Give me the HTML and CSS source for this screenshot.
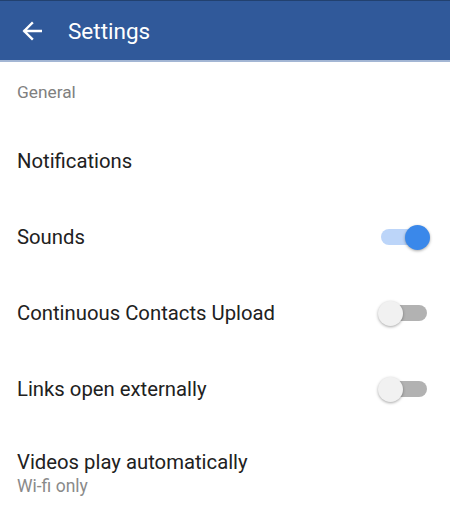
FILE: index.html
```html
<!DOCTYPE html>
<html lang="en">
<head>
    <meta charset="UTF-8">
    <meta name="viewport" content="width=device-width, initial-scale=1.0">
    <title>Settings</title>
    <link rel="stylesheet" href="styles.css">
</head>
<body>
    <div class="toolbar">
        <button class="back" aria-label="Back">
            <svg width="20" height="20" viewBox="0 0 20 20">
                <path d="M19 10H2.5M10 2.2L2.2 10L10 17.8" fill="none" stroke="#fff" stroke-width="2.4" stroke-linecap="square"/>
            </svg>
        </button>
        <h1>Settings</h1>
    </div>
    <div class="section">General</div>
    <ul class="list">
        <li class="row">
            <span class="label">Notifications</span>
        </li>
        <li class="row">
            <span class="label">Sounds</span>
            <span class="switch on"><span class="knob"></span></span>
        </li>
        <li class="row">
            <span class="label">Continuous Contacts Upload</span>
            <span class="switch"><span class="knob"></span></span>
        </li>
        <li class="row">
            <span class="label">Links open externally</span>
            <span class="switch"><span class="knob"></span></span>
        </li>
        <li class="row double">
            <div>
                <div class="label">Videos play automatically</div>
                <div class="sub">Wi-fi only</div>
            </div>
        </li>
    </ul>
</body>
</html>
```

FILE: styles.css
```css
body {
    margin: 0;
    font-family: Roboto, "Noto Sans", sans-serif;
    background: #fff;
    color: #212121;
}
.toolbar {
    height: 59px;
    background: #30599a;
    border-top: 1px solid #22416f;
    border-bottom: 2px solid #a3b6d4;
    display: flex;
    align-items: center;
}
.back {
    background: none;
    border: none;
    padding: 0;
    margin: 0 0 0 22px;
    width: 20px;
    height: 20px;
    display: flex;
}
h1 {
    margin: 0 0 0 26px;
    font-size: 22.5px;
    font-weight: 400;
    color: #fff;
}
.section {
    padding: 20px 17px 0;
    height: 41px;
    font-size: 17.3px;
    color: #808080;
}
.list {
    list-style: none;
    margin: 0;
    padding: 0;
}
.row {
    height: 76px;
    padding: 0 23px 0 17px;
    display: flex;
    align-items: center;
    justify-content: space-between;
}
.row.double {
    height: auto;
    padding-top: 23px;
    align-items: flex-start;
}
.label {
    font-size: 20.3px;
    line-height: 24px;
    color: #212121;
}
.sub {
    font-size: 17.5px;
    line-height: 25px;
    color: #8a8a8a;
    margin-top: 0;
}
.switch {
    position: relative;
    width: 46px;
    height: 16px;
    border-radius: 8px;
    background: #b2b2b2;
}
.switch .knob {
    position: absolute;
    top: -4.5px;
    left: -3px;
    width: 25px;
    height: 25px;
    border-radius: 50%;
    background: #f1f1f1;
    box-shadow: 0 1px 3px rgba(0, 0, 0, 0.35);
}
.switch.on {
    background: #bcd5f9;
}
.switch.on .knob {
    left: 24px;
    background: #3a88ea;
}
```
